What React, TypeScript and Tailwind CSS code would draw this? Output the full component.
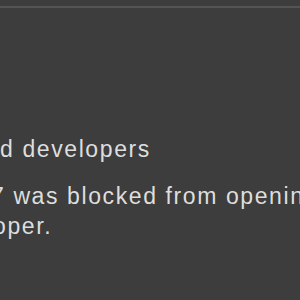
export default function App() {
  return (
    <div
      className="w-[300px] h-[300px] bg-[#3c3d3c] overflow-hidden flex flex-col"
      style={{ fontFamily: '"Liberation Sans", Arial, sans-serif' }}
    >
      <div className="h-[6px] shrink-0" />
      <div className="h-[2px] shrink-0 bg-[#535453]" />
      <div className="flex flex-col pt-[126px] text-[#dedede] text-[23px] leading-[30px] tracking-[1.6px] whitespace-nowrap">
        <div>d developers</div>
        <div className="mt-[17px] flex flex-col">
          <div className="ml-[-9px]">7 was blocked from opening because</div>
          <div className="ml-[-7px]">oper.</div>
        </div>
      </div>
    </div>
  );
}
